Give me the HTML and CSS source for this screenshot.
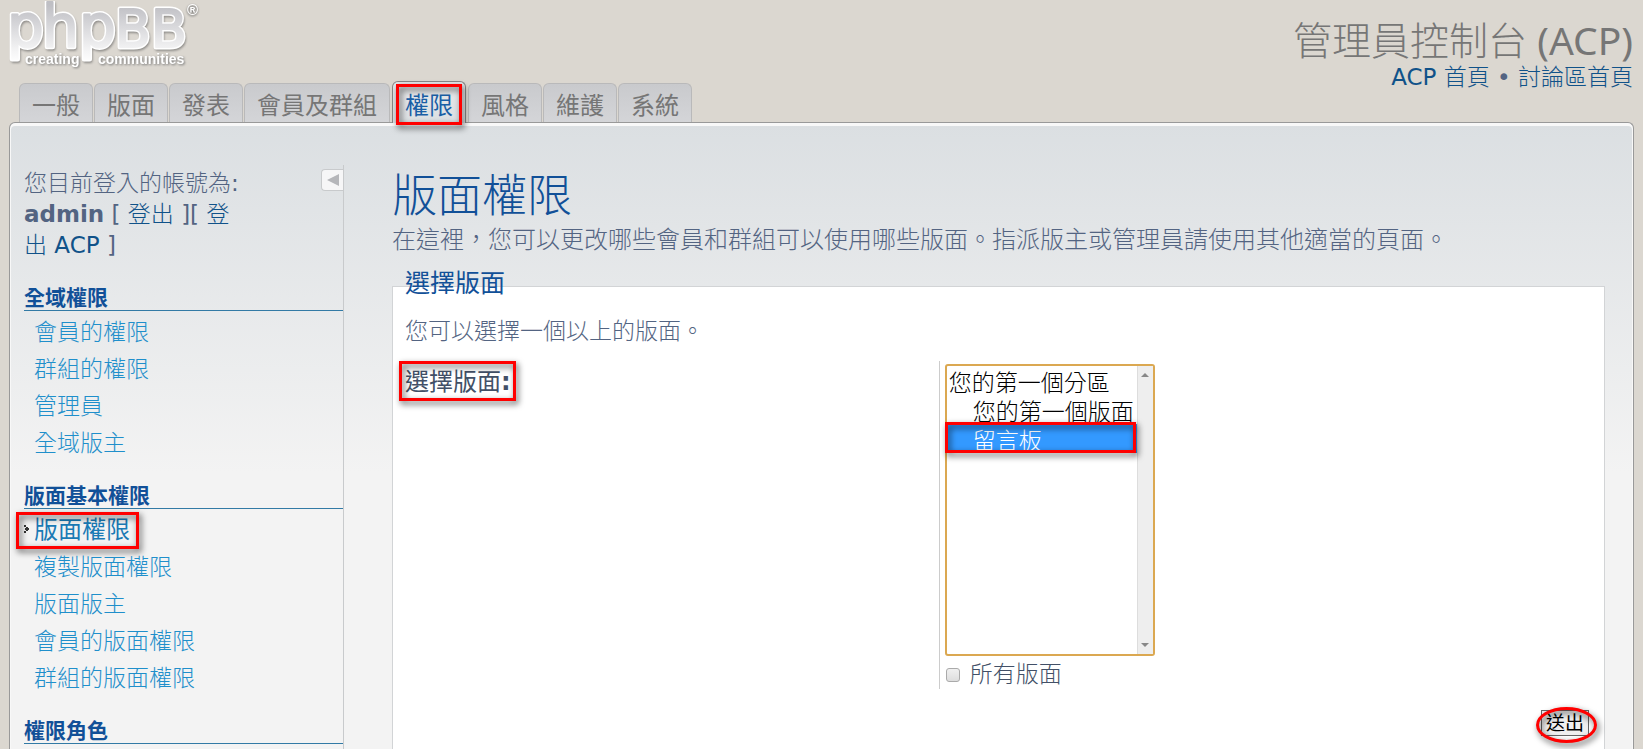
FILE: index.html
```html
<!DOCTYPE html>
<html lang="zh-Hant">
<head>
<meta charset="utf-8">
<title>管理員控制台 (ACP)</title>
<link rel="stylesheet" href="styles.css">
</head>
<body>
<header class="page-header">
  <a class="logo" href="#" aria-label="phpBB creating communities">
    <svg width="204" height="74" viewBox="0 0 204 74">
      <defs>
        <linearGradient id="metal" gradientUnits="userSpaceOnUse" x1="0" y1="4" x2="0" y2="62">
          <stop offset="0" stop-color="#bfbfc4"/>
          <stop offset="0.75" stop-color="#f2f2f3"/>
          <stop offset="1" stop-color="#ffffff"/>
        </linearGradient>
        <g id="word">
          <text class="logo-lower" y="46" x="7 42 79">php</text>
          <text class="logo-upper" y="46" x="115 151">BB</text>
        </g>
      </defs>
      <use href="#word" class="logo-shade"/>
      <use href="#word" class="logo-rim"/>
      <use href="#word" class="logo-face"/>
      <text class="logo-mark" x="187" y="14">®</text>
      <text class="logo-tag" x="25" y="63">creating</text>
      <text class="logo-tag" x="98" y="63">communities</text>
    </svg>
  </a>
  <div class="heading">
    <h1>管理員控制台 <span class="latin">(ACP)</span></h1>
    <p><a href="#"><span class="latin">ACP</span> 首頁</a> <span class="latin">•</span> <a href="#">討論區首頁</a></p>
  </div>
</header>

<nav class="tabs">
  <a href="#">一般</a>
  <a href="#">版面</a>
  <a href="#">發表</a>
  <a href="#">會員及群組</a>
  <a href="#" class="active">權限<span class="mark mark-tab"></span></a>
  <a href="#">風格</a>
  <a href="#">維護</a>
  <a href="#">系統</a>
</nav>

<div class="panel">
  <aside class="menu">
    <div class="account">
      <p>您目前登入的帳號為<span class="latin">:</span><br><strong>admin</strong> <span class="latin">[ <a href="#" class="cjk">登出</a> ][ </span><a href="#">登<br>出 <span class="latin">ACP</span></a> <span class="latin">]</span></p>
      <button class="toggle" type="button" aria-label="收合選單">
        <svg width="12" height="12" viewBox="0 0 12 12"><path d="M0 6 12 0V12Z" fill="#b5b6ba"/></svg>
      </button>
    </div>
    <h2>全域權限</h2>
    <ul>
      <li><a href="#">會員的權限</a></li>
      <li><a href="#">群組的權限</a></li>
      <li><a href="#">管理員</a></li>
      <li><a href="#">全域版主</a></li>
    </ul>
    <h2>版面基本權限</h2>
    <ul>
      <li class="current">
        <svg class="bullet" width="5" height="8" viewBox="0 0 5 8"><path d="M0 0H2V2H0ZM2 2H4V3H5V5H4V6H2V5H1V3H2ZM0 6H2V8H0Z" fill="#333"/></svg>
        <a href="#">版面權限</a><span class="mark mark-item"></span>
      </li>
      <li><a href="#">複製版面權限</a></li>
      <li><a href="#">版面版主</a></li>
      <li><a href="#">會員的版面權限</a></li>
      <li><a href="#">群組的版面權限</a></li>
    </ul>
    <h2>權限角色</h2>
  </aside>

  <main class="main">
    <h2 class="title">版面權限</h2>
    <p class="intro">在這裡，您可以更改哪些會員和群組可以使用哪些版面。指派版主或管理員請使用其他適當的頁面。</p>
    <form>
      <fieldset>
        <legend>選擇版面</legend>
        <p class="hint">您可以選擇一個以上的版面。</p>
        <div class="row">
          <div class="term"><label for="forum">選擇版面<b>:</b></label><span class="mark mark-term"></span></div>
          <div class="field">
            <div class="list">
              <select id="forum" multiple size="10">
                <option>您的第一個分區</option>
                <option class="child">您的第一個版面</option>
                <option class="child" selected>留言板</option>
              </select>
              <span class="scrollbar" aria-hidden="true">
                <svg width="8" height="4" viewBox="0 0 8 4"><path d="M0 4 4 0 8 4Z" fill="#888"/></svg>
                <svg width="8" height="4" viewBox="0 0 8 4"><path d="M0 0H8L4 4Z" fill="#888"/></svg>
              </span>
              <span class="mark mark-option"></span>
            </div>
            <div class="all"><input type="checkbox" id="all"><label for="all">所有版面</label></div>
          </div>
        </div>
        <div class="actions">
          <button class="submit" type="submit">送出</button>
          <span class="mark mark-submit"></span>
        </div>
      </fieldset>
    </form>
  </main>
</div>
</body>
</html>
```

FILE: styles.css
```css
* {
  box-sizing: border-box;
}

html {
  height: 100%;
}

body {
  display: flex;
  flex-direction: column;
  height: 100vh;
  margin: 0;
  padding: 0 9px;
  overflow: hidden;
  background: #dbd7d0;
  color: #536482;
  font-family: "DejaVu Sans", "Noto Sans CJK TC", sans-serif;
  font-size: 23px;
  font-weight: 300;
  line-height: 31px;
}

h1, h2, p, ul {
  margin: 0;
  padding: 0;
  font-weight: 300;
}

ul {
  list-style: none;
}

a {
  color: #105289;
  text-decoration: none;
}

strong, b {
  font-weight: 700;
}

.latin {
  font-weight: 400;
}

.cjk {
  font-weight: 300;
}

/* Header */
.page-header {
  display: flex;
  flex: none;
  justify-content: space-between;
  height: 81px;
}

.logo {
  display: block;
  margin-left: -9px;
  padding-top: 1px;
}

.logo svg {
  display: block;
}

.logo-lower {
  font: 400 58px "DejaVu Sans", sans-serif;
}

.logo-upper {
  font: 400 52px "DejaVu Sans", sans-serif;
}

.logo-shade {
  fill: #8d8b88;
  stroke: #8d8b88;
  stroke-width: 4px;
  stroke-linejoin: round;
  transform: translate(1px, 2px);
  filter: blur(1px);
}

.logo-rim {
  fill: #fff;
  stroke: #fff;
  stroke-width: 5px;
  stroke-linejoin: round;
}

.logo-face {
  fill: url(#metal);
  stroke: url(#metal);
  stroke-width: 2px;
  stroke-linejoin: round;
}

.logo-mark {
  font: 700 15px "Liberation Sans", sans-serif;
  fill: #fff;
  filter: drop-shadow(0 1px 1px #555);
}

.logo-tag {
  font: 700 14px "Liberation Sans", sans-serif;
  fill: #fff;
  filter: drop-shadow(1px 1px 1px #777);
}

.heading {
  padding: 18px 1px 0 0;
  text-align: right;
}

.heading h1 {
  color: #767676;
  font-family: "Noto Sans", "Noto Sans CJK TC", sans-serif;
  font-size: 39px;
  line-height: 44px;
}

/* Tabs */
.tabs {
  display: flex;
  flex: none;
  align-items: flex-end;
  gap: 1px;
  height: 41px;
  padding-left: 10px;
}

.tabs a {
  height: 39px;
  padding: 7px 12px 0;
  border: 1px solid #b9b9ba;
  border-width: 1px 1px 0;
  border-radius: 6px 6px 0 0;
  background: linear-gradient(#c9cacd, #d4d5d8);
  color: #767676;
  font-size: 24px;
  font-weight: 400;
}

.tabs .active {
  position: relative;
  z-index: 1;
  height: 42px;
  margin: 0 1px -1px;
  padding-top: 9px;
  border-color: #888;
  background: linear-gradient(#e8e9eb, #dbdfe2);
  color: #1a5fa6;
}

/* Panel */
.panel {
  display: flex;
  flex: 1;
  align-items: stretch;
  min-height: 0;
  padding: 42px 28px 0 13px;
  border: 1px solid #999;
  border-bottom: 0;
  border-radius: 6px 6px 0 0;
  box-shadow: inset 0 2px 0 1px #f8f8f8;
  background: linear-gradient(#dbdfe2, #f3f3f3 350px);
}

/* Sidebar */
.menu {
  flex: 0 0 320px;
  margin-left: 1px;
  border-right: 1px solid #c8cacc;
}

.account {
  display: flex;
  justify-content: space-between;
  align-items: flex-start;
  padding-top: 3px;
}

.toggle {
  display: flex;
  align-items: center;
  justify-content: center;
  width: 22px;
  height: 22px;
  margin-top: 1px;
  padding: 0;
  border: 1px solid #c8cacc;
  border-right: 0;
  border-radius: 4px 0 0 4px;
  background: #f6f6f7;
}

.menu h2 {
  height: 25px;
  margin-top: 25px;
  border-bottom: 1px solid #327aa5;
  color: #115098;
  font-size: 21px;
  font-weight: 700;
  line-height: 25px;
}

.menu ul {
  padding-top: 3px;
  margin-bottom: -3px;
}

.menu li {
  position: relative;
  padding-left: 10px;
  line-height: 37px;
}

.menu li a {
  color: #1f8fcb;
}

.menu .current a {
  color: #1a7ab5;
  font-size: 24px;
  font-weight: 400;
}

.bullet {
  position: absolute;
  top: 13px;
  left: 0;
}

/* Content */
.main {
  flex: 1;
  display: flex;
  flex-direction: column;
  margin-left: 48px;
}

.title {
  padding-top: 4px;
  color: #115098;
  font-size: 45px;
  line-height: 56px;
}

.intro {
  font-size: 24px;
}

.main form {
  flex: 1;
  display: flex;
  flex-direction: column;
}

fieldset {
  position: relative;
  flex: 1;
  margin: 30px 0 0;
  padding: 0 13px 0 12px;
  border: 1px solid #d2d4d6;
  border-bottom: 0;
  background: #fff;
}

legend {
  position: absolute;
  top: -19px;
  left: 12px;
  padding: 0;
  color: #115098;
  font-size: 25px;
  font-weight: 400;
}

.hint {
  padding-top: 29px;
}

.row {
  display: flex;
  margin-top: 14px;
}

.term {
  position: relative;
  flex: 0 0 45%;
  padding-top: 6px;
  color: #425067;
  font-size: 24px;
  font-weight: 400;
}

.field {
  flex: 1;
  padding: 3px 0 0 5px;
  border-left: 1px solid #ccc;
}

.list {
  position: relative;
  width: 210px;
}

select {
  display: block;
  width: 100%;
  height: 292px;
  padding: 0;
  overflow: hidden;
  border: 2px solid #dba851;
  border-radius: 3px;
  background: #fff;
  color: #000;
  font: 300 23px/29px "DejaVu Sans", "Noto Sans CJK TC", sans-serif;
  outline: 0;
}

option {
  display: flex;
  align-items: center;
  height: 29px;
  min-height: 0;
  padding: 0 2px;
  font-weight: 300;
}

option.child {
  padding-left: 26px;
}

option:checked {
  background: #3399ff linear-gradient(#3399ff, #3399ff);
  color: #fff;
}

/* Always-visible scroll track over the list's right edge */
.scrollbar {
  position: absolute;
  top: 2px;
  right: 2px;
  bottom: 2px;
  display: flex;
  flex-direction: column;
  align-items: center;
  justify-content: space-between;
  width: 16px;
  padding: 7px 0;
  border-left: 1px solid #ddd;
  background: #eee;
}

.all {
  display: flex;
  align-items: center;
  gap: 10px;
  padding: 3px 0 0 1px;
  line-height: 30px;
}

.all input {
  appearance: none;
  width: 14px;
  height: 14px;
  margin: 2px 0 0;
  border: 1px solid #aaa;
  border-radius: 3px;
  background: linear-gradient(#f0f0f0, #ddd);
}

.all label {
  color: #425067;
}

.actions {
  position: relative;
  display: flex;
  justify-content: flex-end;
  margin: 21px 2px 0 0;
}

.submit {
  width: 48px;
  height: 26px;
  padding: 0;
  border: 1px solid #666;
  background: #efefef;
  color: #000;
  font: 400 19px/22px "DejaVu Sans", "Noto Sans CJK TC", sans-serif;
}

/* Red annotations */
.mark {
  position: absolute;
  border: 3px solid #f00;
  filter: drop-shadow(2px 3px 3px rgba(0, 0, 0, 0.7));
  pointer-events: none;
}

.mark-tab {
  inset: 2px 3px -2px 3px;
}

.mark-item {
  top: 0;
  left: -8px;
  width: 123px;
  height: 37px;
}

.mark-term {
  top: 0;
  left: -6px;
  width: 117px;
  height: 40px;
}

.mark-option {
  top: 58px;
  left: 0;
  width: 191px;
  height: 31px;
}

.mark-submit {
  top: -3px;
  right: -8px;
  width: 61px;
  height: 36px;
  border-radius: 50%;
}
```
